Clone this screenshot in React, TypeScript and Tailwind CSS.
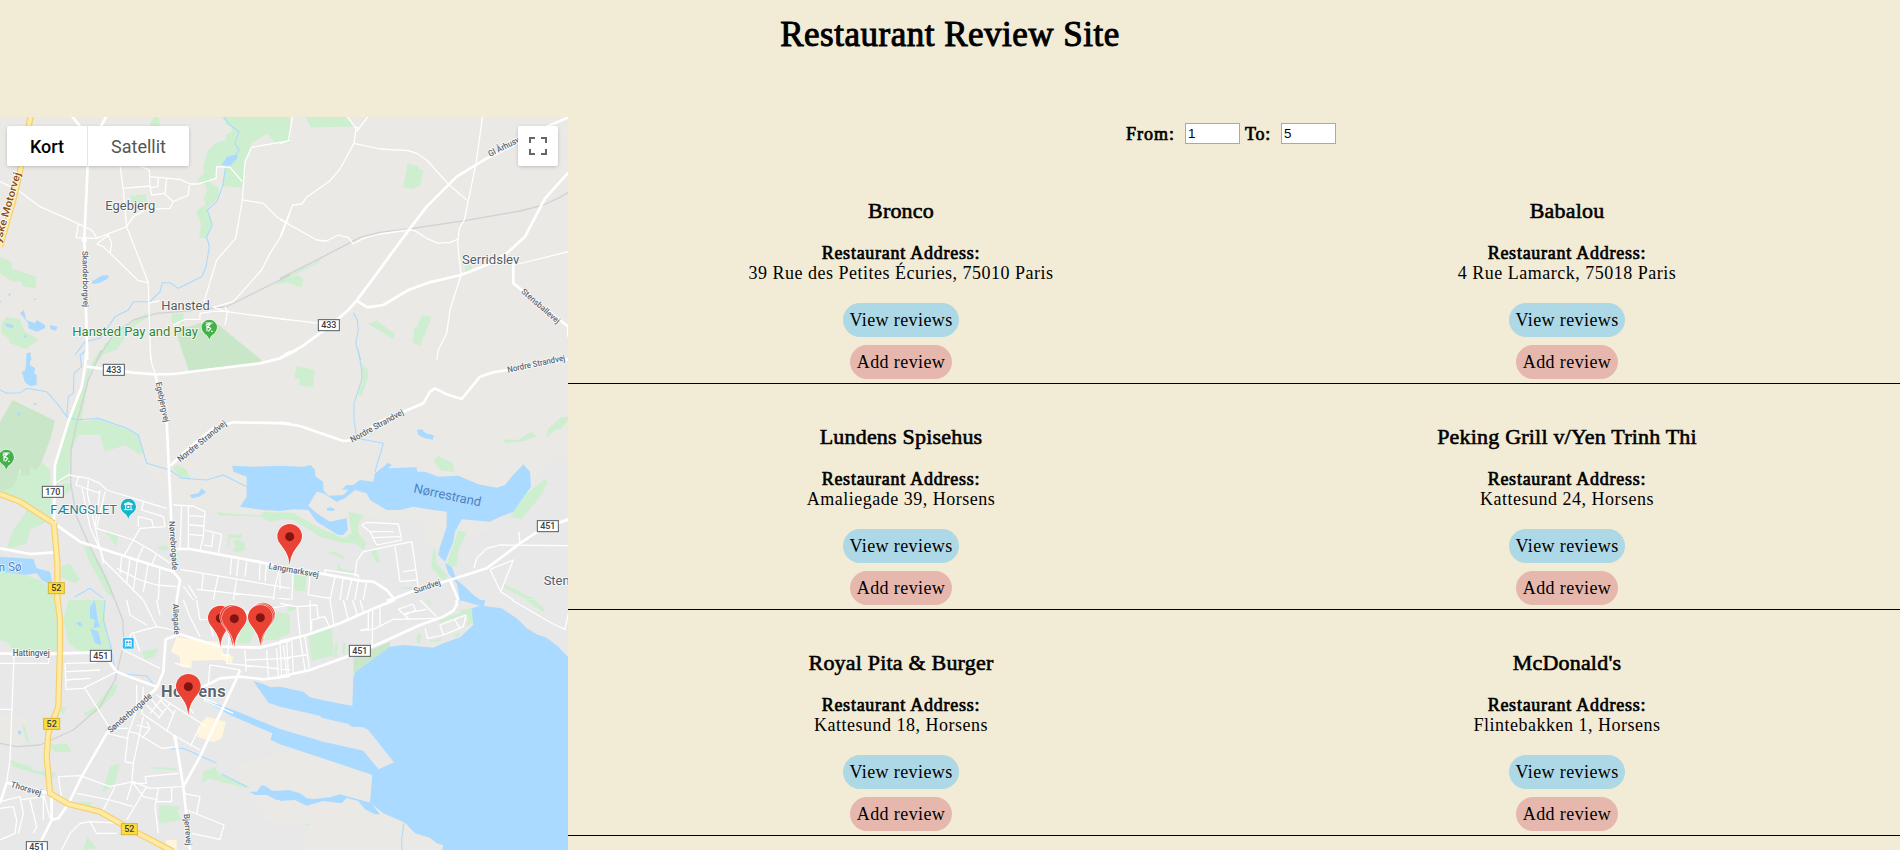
import type { ReactNode } from "react";

type Tile = "A" | "B" | "C" | "D" | "E" | "F";

/* Map sections, each drawn at three units to the pixel. */
const origins: Record<Tile, string> = {
  A: "translate(0 110) scale(.33333)",
  B: "translate(280 110) scale(.33333)",
  C: "translate(0 350) scale(.33333)",
  D: "translate(280 350) scale(.33333)",
  E: "translate(0 600) scale(.33333)",
  F: "translate(280 600) scale(.33333)",
};
const tiles: Tile[] = ["A", "B", "C", "D", "E", "F"];

const urban: Partial<Record<Tile, string>> = {
  C: "M212,400 L215,300 235,258 300,258 315,305 375,285 430,340 520,462 600,465 650,497 870,510 870,780 0,780 0,445 60,460 150,510 165,400z",
  D: "M0,508 L60,520 190,575 250,560 235,500 430,510 440,600 620,540 720,440 830,320 865,320 865,750 0,750z",
  E: "M0,120 L170,160 180,0 870,0 870,450 700,500 760,600 800,660 870,690 870,750 0,750 0,430 60,440 80,350 0,345z",
  F: "M0,0 L865,0 865,180 300,600 200,330 342,487 296,508 0,400z M0,675 L85,680 60,750 0,750z",
};

const parks: Record<Tile, string> = {
  A: "M665,18L870,18 870,100 825,98 802,72 755,98 735,155 727,233 665,228 677,165 650,170 648,205 625,215 637,222 657,235 655,262 620,295 637,340 620,387 598,383 603,340 588,310 594,298 616,285 612,262 622,240 610,215 590,215 600,200 612,190 610,165 625,120 645,100 680,90 675,75 695,65 697,52 680,45z M455,30L468,18 477,25 480,48 448,48z M392,258L438,253 440,275 395,280z M0,440L35,455 35,475 108,500 107,535 70,530 60,512 40,515 0,490z M5,640L20,620 60,628 65,645 75,665 115,688 80,717 30,700 25,685 5,670z M515,612L550,610 552,640 515,640z M300,735L315,700 350,675 375,650 440,610 445,622 390,655 350,720z M820,525L870,495 870,515z",
  B: "M0,45L10,45 10,95 0,95z M75,18L198,18 222,50 93,52z M383,160L415,170 417,178 430,182 420,228 397,237 370,232z M555,467L575,467 575,483 555,485z M15,512L50,495 72,508 62,533z M0,507L120,450 120,455 0,517z M258,638L275,640 290,632 345,672 340,687z M425,617L455,620 420,708 397,697 403,655 410,650z",
  C: "M125,335L150,360 155,500 120,490 60,450 0,425 0,400z M262,60L300,0 335,0 310,15 270,65 245,200 250,215 295,205 370,235 415,255 432,305 420,315 375,285 315,305 300,255 235,255 215,300 205,390 165,400 165,350 205,215 250,110z M515,350L535,345 560,360 570,390 540,380z M650,487L780,497 790,485 870,490 870,505 810,515 780,500 655,497z M20,595L40,540 75,490 80,470 125,490 150,510 90,540 80,580 45,590z M0,660L60,670 120,690 160,720 165,752 0,752z M683,555L725,552 725,565 690,565 688,590 683,590z M700,575L712,568 735,580 735,600 710,608 698,600 708,590z M250,588L265,590 300,640 330,700 345,745 320,730 270,640z M315,545L355,555 350,590 335,570z M470,590L500,585 505,600 480,600z M185,650L210,640 240,690 225,700 180,680z M190,400L215,400 212,420 190,440z",
  D: "M50,47L105,60 98,112 57,105 60,88 43,85z M243,40L265,60 262,90 245,137 232,135 248,95z M667,268L715,270 750,247 772,257 735,273 680,280z M798,265L805,235 845,200 865,200 865,210 845,235 825,240z M460,330L475,318 520,340 522,367 480,360z M690,500L735,435 795,388 803,397 780,440 725,507z M0,487L40,488 110,530 190,565 215,550 205,485 250,495 235,520 235,550 260,580 250,600 225,580 190,580 120,560 40,510 0,508z M140,608L165,605 195,622 195,628z M172,660L175,637 182,655 215,665 222,655 220,672z M535,540L560,548 535,600 530,650 497,645 515,600z M455,620L465,590 470,640 505,680 490,690 455,655z M40,675L80,675 75,725 43,720z M270,600L290,600 300,635 290,640z M355,710L395,712 395,720z M675,703L765,748 740,748 670,712z",
  E: "M0,0L170,0 175,100 170,155 40,150 25,130 0,120z M205,0L310,0 320,100 340,150 240,155 205,130 190,60z M425,155L475,145 465,170 435,178z M250,340L280,325 330,260 355,250 345,280 290,335 260,350z M145,435L200,430 215,455 165,455z M30,480L60,490 90,500 75,480 100,510 170,520 160,535 40,500z M305,580L330,500 360,490 345,550z M605,550L610,515 645,500 655,520 700,540 750,560 745,565 660,545 630,535z M250,750L262,710 290,745z M720,100L750,50 780,50 750,130 710,130z M790,70L835,35 870,45 870,100 830,120 790,120z M175,325L200,320 190,345z M65,375L75,378 88,430 80,425z M478,615L540,620 530,635 545,660 480,670 475,650z M450,500L530,505 530,512 450,505z M230,605L275,607 270,622z",
  F: "M85,108L155,85 162,165 95,183z M0,40L22,38 22,105 0,108z M165,130L173,130 170,175 162,170z M188,128L197,128 195,165 187,160z M220,215L220,173 330,125 330,140 225,217 220,240z M535,30L575,25 583,65 560,80 565,55z M735,0L765,0 797,30 790,35z M22,22L50,15 48,30 22,35z M410,105L425,100 420,130 410,130z M450,120L485,115 480,124 450,125z M520,105L540,97 535,112z M475,60L550,35 545,45 480,68z M435,0L445,0 462,20z M560,718L565,720 558,750 552,748z M60,675L90,672 88,677z",
};

const dark: Partial<Record<Tile, string>> = {
  A: "M528,662L600,640 652,642 782,748 787,758 567,782 545,720z",
  C: "M0,215L38,150 165,212 150,270 125,335 110,360 90,350 90,375 65,378 62,355 40,410 0,425z",
  F: "M221,215L221,173 330,125 330,140 225,217z",
};

const water: Record<Tile, string> = {
  A: "M665,165L680,140 712,133 712,145 690,168z M275,515L305,497 325,495 325,505 300,518 278,522z M60,610L72,600 78,630 105,640 110,630 135,645 135,655 110,665 85,655 85,640z M150,645L172,650 168,662 152,658z M22,555L33,549 30,557z M0,570L6,580 0,575z M15,640L40,645 38,655 20,650z M80,735L88,725 95,750 82,750z M70,678L80,675 78,685z M100,568L108,565 108,570z",
  B: "",
  C: "M65,65L75,62 78,45 80,10 92,8 90,45 105,55 103,72 110,75 110,105 90,108 75,97z M48,185L63,190 58,200z M98,162L110,158 108,166z M570,435L595,430 605,415 618,427 597,440 575,445z M0,620L100,627 110,655 150,665 160,710 125,690 110,670 80,675 0,665z",
  D: "M-143,347L-80,350 0,347 70,350 92,345 105,360 107,380 130,395 130,420 145,437 190,435 205,420 185,418 200,405 220,405 240,390 280,395 285,370 325,338 335,345 325,355 410,352 412,365 435,365 475,380 535,377 595,403 650,413 675,405 695,380 730,343 750,365 753,410 735,435 700,485 660,500 630,515 545,508 525,545 520,575 495,635 475,615 480,590 500,530 500,485 460,480 400,470 360,480 320,480 270,450 260,430 225,420 195,445 170,455 130,430 110,425 95,450 85,467 110,490 150,515 200,505 203,540 190,555 175,555 110,515 85,480 40,478 0,483 -50,480 -120,470 -100,440 -100,410 -100,380 -140,365z M495,640L515,650 530,690 560,715 580,735 605,752 540,752 530,700 505,670z M140,475L150,472 165,477 160,483 142,482z M411,240L425,238 437,250 462,256 458,269 435,265 415,255z",
  E: "M270,20L285,0 293,60 300,80 280,85 285,60 270,55z M270,85L295,95 305,135 285,130z M228,68L240,65 248,75 240,80z M52,395L60,390 65,400 58,405z M748,575L770,575 785,555 800,560 815,572 870,572 870,600 830,600 800,585 765,585z",
  F: "M540,0L615,0 612,18 665,25 710,55 740,85 770,103 800,113 835,140 865,172 865,750 487,750 490,735 470,730 450,713 405,700 375,668 310,640 270,608 277,525 150,482 0,433 -28,420 -23,400 -150,345 -240,295 -140,330 0,387 130,425 250,452 296,508 342,487 265,390 250,382 215,380 205,372 125,353 120,347 0,320 -35,308 -80,243 -50,252 -28,262 0,260 70,275 90,292 140,303 217,318 220,235 225,217 330,140 370,135 460,143 490,130 540,112 580,75 575,25 600,18z M0,573L25,570 60,580 80,595 100,597 150,592 180,583 230,597 272,608 300,643 285,643 255,628 235,603 200,594 185,610 130,603 80,617 45,600 0,603z",
};

const streams: Record<Tile, string> = {
  A: "M670,18L690,45 717,65 705,100 717,120 705,140 M677,170L668,230 650,275 622,300 637,345 620,380 628,410 618,470 605,500 535,535 510,518 487,518 480,545 450,575 400,575 385,600 345,620 325,650 300,685 255,695 225,735",
  B: "M220,608L232,630 235,660 227,700 242,750",
  C: "M0,120L20,130 60,128 80,115 140,125 175,165 200,200 205,140 220,130 222,70 245,50 240,15 260,0 M200,200L230,210 295,205 380,235 415,255 440,340 510,360 545,385 620,390 670,375 740,410 M225,740L270,715 310,745",
  D: "M235,0L245,60 245,90 222,160 222,210 230,265 310,280 285,365",
  E: "M315,0L310,60 330,130 345,210 370,222 440,228 465,258 M515,447L550,445 650,490 M665,522L740,560",
  F: "M372,668L365,720 366,750",
};

const thin: Record<Tile, string> = {
  A: "M0,215L60,245 120,290 200,325 275,360 290,383 M235,343L228,383 290,385 380,350 M290,402L325,375 335,400 330,430 M290,402L310,410 415,512 445,518 M360,165L370,240 380,350 445,518 447,600 452,750 M370,235L450,228 M420,168L448,180 450,228 455,255 492,250 520,275 565,255 568,225 M450,200L540,208 570,222 595,222 648,205 650,170 690,172 727,215 M475,203L473,230 450,233 M500,205L495,250 M520,275L510,295 440,298 400,320 380,350 M870,92L755,112 735,155 727,270 707,385 650,450 612,575 M727,270L790,280 830,320 870,345 M870,310L845,375 810,430 785,480 700,575 640,592 680,605 870,630 M445,580L480,572 M520,645L555,628 600,628 600,610 640,604 690,604 M675,590L682,605 675,645",
  B: "M38,18L25,93 0,100 M200,18L228,55 222,100 M265,18L230,65 M222,50L240,55 M222,100L300,117 385,122 410,130 440,150 508,225 560,270 M222,100L178,180 150,212 80,262 65,282 38,285 0,380 M608,18L588,160 553,330 538,355 533,400 543,495 510,600 500,670 475,720 470,750 M0,328L110,390 140,393 175,375 205,383 220,402 250,385 300,372 385,360 405,362 440,385 475,400 510,397 533,388 M715,462L865,425 M0,626L120,640",
  C: "M450,0L455,40 465,70 M165,400L205,375 265,385 300,400 320,420 450,460 500,475 M235,380L228,405 300,430 M265,390L262,430 285,530 310,640 M245,410L270,530 300,600 M315,425L290,535 400,570 460,605 510,640 M300,420L285,530 M520,465L580,468 615,485 610,560 600,600 M565,470L565,600 M545,465L540,595 M565,497L615,500 M565,525L613,528 M565,553L612,557 M615,540L665,553 655,610 M640,550L635,590 612,585 M300,590L310,630 370,690 430,750 M365,620L360,670 M390,625L380,700 M412,632L400,720 M445,640L430,725 M480,650L475,750 M400,570L370,620 M430,590L410,632 M470,610L455,645 M695,625L690,675 M715,628L710,678 M740,635L735,680 M780,640L778,690 M800,640L795,695 M840,650L825,710 820,750 M540,658L870,715 M610,668L605,720 M350,655L420,690 470,705 530,710 M430,455L425,480 490,500 495,530 420,535 400,570 M415,530L415,500 455,510 460,530 M550,708L580,750 M565,705L590,745 M655,675L640,750 M710,690L700,750 M590,718L870,748",
  D: "M245,525L260,517 355,522 365,570 290,585 270,545 340,545 M245,525L270,545 M280,563L360,560 M225,680L230,635 250,605 395,575 405,640 415,715 M345,590L360,695 410,690 M370,665L405,660 M582,655L590,625 620,595 660,585 865,587 M720,580L717,545 M630,658L662,725 700,630 630,658 M662,725L700,750 M135,675L135,660 235,675 235,685 M90,670L85,735 150,745 M165,680L150,750 M190,682L180,750 M215,690L200,750 M235,690L225,750 M260,695L250,750 M40,660L35,750 M0,670L0,720",
  E: "M0,190L145,190 150,160 M42,165L30,480 20,545 M0,328L35,328 M195,190L198,268 250,265 350,215 M198,215L300,210 M198,240L270,235 M195,190L290,188 M255,265L330,385 385,385 M320,400L385,415 M410,255L410,330 385,400 375,485 M430,350L400,490 375,485 M400,490L395,555 380,600 M430,260L425,340 M425,340L520,405 600,450 M385,395L410,400 485,445 530,440 M440,365L450,385 M410,375L450,385 430,410 M470,285L620,380 M455,300L490,340 M440,315L480,355 M490,290L450,340 M510,310L475,355 M480,300L520,340 M525,330L500,395 M610,300L700,340 M580,340L560,310 M600,290L650,310 M600,380L570,440 M435,530L535,520 M435,530L440,550 395,550 M175,530L185,595 210,605 M175,530L240,527 330,560 400,545 450,565 545,560 M230,580L330,600 400,620 M345,560L310,630 M440,560L380,660 M400,550L430,590 475,600 M475,565L465,620 475,700 M515,560L515,605 470,605 M550,580L600,590 590,640 M560,630L672,675 660,718 575,700 M0,605L60,590 70,640 55,700 M0,625L40,620 50,660 45,700 0,720 M60,600L130,590 130,660 M90,600L110,680 100,700 M130,580L150,655 M185,750L210,700 240,670 270,665 370,670 M270,665L290,700 350,700 M380,0L390,45 440,75 M430,0L470,80 520,90 M470,0L480,45 M365,150L395,100 470,80 M370,150L430,180 480,205 M400,100L420,155 M550,0L570,50 600,110 M590,0L600,60 M600,60L870,15 M625,50L640,110 M690,90L680,190 870,210 M665,165L690,165 M735,150L738,215 M800,150L805,230 M830,145L835,230 M850,135L860,225 M735,180L870,175 M630,195L625,250 M630,195L720,210 M525,190L570,200 M520,405L530,450",
  F: "M0,10L50,20 110,15 115,55 95,60 95,90 M52,20L60,105 M90,0L92,100 M110,55L135,50 150,85 M150,0L162,75 M190,0L205,60 M218,0L232,45 M240,0L250,35 M265,35L265,85 240,92 M278,30L277,140 M300,22L300,75 M240,92L280,88 340,58 470,55 M355,28L398,12 407,30 375,45 385,60 M355,28L385,55 M375,40L440,28 M420,0L470,50 M435,85L443,115 490,105 550,80 558,45 480,75 490,105 M525,60L540,85 M695,0L820,72 855,88 865,40 M0,175L80,165 M0,130L5,225 M20,125L25,220 M35,120L40,220 M60,110L75,210 M75,110L88,205",
};

const major: Record<Tile, string> = {
  A: "M267,60L263,170 253,388 257,560 262,750 M215,18L240,48 M320,18L303,48",
  B: "M865,22L800,50 700,105 620,145 530,200 440,290 385,362 230,572 205,600 140,655 65,710 0,745 M230,572L262,592 310,585 385,540 445,518 543,495 620,465 680,430 735,380 795,265 865,188 M700,460L700,520 865,650 865,680",
  C: "M260,0L255,50 245,110 205,215 165,345 162,520 M870,5L840,25 780,40 640,57 520,72 465,73 400,68 260,50 M162,520L240,575 410,630 520,665 540,690 530,750 M0,595L90,612 165,607 M465,70L500,215 512,470 520,665 M512,347L560,300 640,235 700,217 870,220 M530,597L570,597 800,640 870,660",
  D: "M0,25L50,0 M0,218L60,228 190,273 215,270 300,215 370,185 430,160 450,125 465,115 500,133 545,147 600,80 640,67 740,50 865,28 M0,650L120,670 240,692 280,695 320,720 345,750 M320,752L345,745 400,722 510,690 620,655 720,580 780,540 865,508 M510,690L535,750",
  E: "M0,160L90,163 270,158 M320,175L350,215 400,235 470,260 M470,265L490,215 497,118 540,103 660,140 780,143 870,120 M470,265L320,400 245,530 205,612 175,655 155,660 M155,580L155,660 130,710 110,750 M550,560L600,470 710,235 720,210 M600,265L660,235 720,230 790,238 870,228 M525,405L550,560 570,750 M530,0L528,100 M20,548L150,580 M20,548L0,610",
  F: "M0,125L80,105 180,70 290,22 345,0 M0,230L90,210 200,170 300,130 420,75 490,50 520,32 530,15 530,0",
};

const rails: Record<Tile, string> = {
  A: "M870,495L740,560 680,590 560,603 470,610 400,630 340,675 290,750",
  B: "M0,505L120,445 240,382 300,367 385,357 555,332 720,303 790,285 840,262 865,247",
  C: "M305,0L265,90 230,220 213,300 212,400 230,500 270,590 310,670 345,750",
  D: "",
  E: "M345,0L368,60 372,130 345,240 300,320 220,390 120,435 50,440 0,430",
  F: "",
};

const highways: Partial<Record<Tile, string>> = {
  A: "M92,18L80,80 60,185 40,270 0,410",
  C: "M0,432L60,455 162,520 M162,520L172,640 172,760",
  E: "M172,-10L180,60 180,150 175,320 145,400 140,470 150,580 205,612 300,635 390,687 520,755",
};

const shops = "M530,110L600,122 665,125 670,160 700,170 695,190 665,180 575,182 575,205 540,200 540,170 512,155z M600,372L620,350 678,365 665,415 640,427 592,410z M500,720L530,720 530,750 495,740z";

function Layer({ data, ...rest }: { data: Partial<Record<Tile, string>>; fill?: string; stroke?: string; strokeWidth?: number }) {
  return (
    <g fill="none" strokeLinejoin="round" {...rest}>
      {tiles.map((t) => (data[t] ? <path key={t} transform={origins[t]} d={data[t]} /> : null))}
    </g>
  );
}

function Label({ x, y, w, size = 26, rotate = 0, color = "#5c6670", children }: {
  x: number; y: number; w?: number; size?: number; rotate?: number; color?: string; children: ReactNode;
}) {
  return (
    <text
      transform={`translate(${x} ${y}) rotate(${rotate})`}
      fontSize={size}
      fontWeight={size < 35 ? 500 : 400}
      fill={color}
      stroke="#fff"
      strokeOpacity={0.8}
      strokeWidth={5}
      paintOrder="stroke"
      textLength={w}
      lengthAdjust="spacingAndGlyphs"
    >
      {children}
    </text>
  );
}

function Shield({ x, y, n, yellow = false }: { x: number; y: number; n: string; yellow?: boolean }) {
  const w = yellow ? 48 : 63;
  return (
    <g transform={`translate(${x} ${y})`}>
      <rect width={w} height={33} fill={yellow ? "#fbdd3e" : "#fff"} stroke={yellow ? "#d8b52f" : "#555b61"} strokeWidth={3} />
      <text x={w / 2} y={26} fontSize={27} fontWeight={500} textAnchor="middle" fill="#3c4043">{n}</text>
    </g>
  );
}

function Pin({ x, y }: { x: number; y: number }) {
  return (
    <g transform={`translate(${x} ${y})`}>
      <path d="M0,0C-3,-30 -11,-40 -23,-57C-31,-68 -37,-75 -37,-87A37,37 0 0 1 37,-87C37,-75 31,-68 23,-57C11,-40 3,-30 0,0z" fill="#ea4335" stroke="#fff" strokeOpacity={0.7} strokeWidth={4} paintOrder="stroke" />
      <circle cy={-86} r={13.5} fill="#7f1410" />
    </g>
  );
}

function Poi({ x, y, color, children }: { x: number; y: number; color: string; children: ReactNode }) {
  return (
    <g transform={`translate(${x} ${y})`}>
      <path d="M0,37C-3,25 -9,22 -16,16A23,23 0 1 1 16,16C9,22 3,25 0,37z" fill={color} stroke="#fff" strokeWidth={3} paintOrder="stroke" />
      {children}
    </g>
  );
}

const golfer = (
  <path d="M-11,-14L10,-14 M-9,-10L-9,-8L0,-12 M4,-12L-4,-3L4,2L-3,11 M-7,-6L-7,11 M5,11L10,11" fill="none" stroke="#fff" strokeWidth={3.5} />
);

function CityMap() {
  return (
    <svg className="block h-[733px] w-[568px]" viewBox="0 117 568 733" fontFamily="Roboto, sans-serif">
      <rect y={117} width={568} height={733} fill="#eae9e5" />
      <Layer data={urban} fill="#e8e8e8" />
      <Layer data={parks} fill="#ceeed0" />
      <Layer data={dark} fill="#c9e7c8" />
      <path transform={origins.E} d={shops} fill="#fff6dd" />
      <Layer data={water} fill="#aadaff" />
      <Layer data={streams} stroke="#aadaff" strokeWidth={3.2} />
      <Layer data={rails} stroke="#d0d2d5" strokeWidth={4} />
      <Layer data={thin} stroke="#fff" strokeWidth={3.8} />
      <Layer data={major} stroke="#fff" strokeWidth={8} />
      <Layer data={highways} stroke="#f6cf6d" strokeWidth={19} />
      <Layer data={highways} stroke="#ffeba3" strokeWidth={12} />

      <g transform={origins.A}>
        <circle cx={253} cy={389} r={8} fill="#fff" />
        <Label x={316} y={299} w={150} size={39} color="#545c66">Egebjerg</Label>
        <Label x={484} y={599} w={145} size={39} color="#545c66">Hansted</Label>
        <Label x={217} y={677} w={377} size={38} color="#2d8639">Hansted Pay and Play</Label>
        <Label x={247} y={423} w={168} size={24} rotate={89}>Skanderborgvej</Label>
        <Label x={2} y={400} w={218} size={31} rotate={-74} color="#8a4b16">yske Motorvej</Label>
        <Poi x={628} y={653} color="#43b049">{golfer}</Poi>
      </g>
      <g transform={origins.B}>
        <Label x={546} y={461} w={172} size={39} color="#545c66">Serridslev</Label>
        <Label x={630} y={141} w={120} size={26} rotate={-27}>Gl Århusvej</Label>
        <Label x={722} y={547} w={145} size={25} rotate={41}>Stensballevej</Label>
        <Shield x={115} y={629} n="433" />
      </g>
      <g transform={origins.C}>
        <Shield x={310} y={43} n="433" />
        <Shield x={127} y={409} n="170" />
        <Shield x={145} y={698} n="52" yellow />
        <Label x={467} y={98} w={122} size={25} rotate={78}>Egebjergvej</Label>
        <Label x={507} y={514} w={147} size={25} rotate={86}>Nørrebrogade</Label>
        <Label x={541} y={337} w={180} size={26} rotate={-39}>Nordre Strandvej</Label>
        <Label x={151} y={493} w={200} size={38} color="#1d8794">FÆNGSLET</Label>
        <Label x={-22} y={665} w={87} size={37} rotate={-2} color="#4f7fc0">en Sø</Label>
        <Poi x={19} y={323} color="#43b049">{golfer}</Poi>
        <Poi x={385} y={470} color="#12b5c9">
          <path d="M-13,-7L0,-13L13,-7z M-13,9H13 M-8,-6V8 M8,-6V8" fill="#fff" stroke="#fff" strokeWidth={3} />
          <rect x={-3} y={-2} width={6} height={6} fill="#fff" />
        </Poi>
      </g>
      <g transform={origins.D}>
        <Label x={217} y={278} w={178} size={26} rotate={-29}>Nordre Strandvej</Label>
        <Label x={684} y={68} w={176} size={26} rotate={-12}>Nordre Strandvej</Label>
        <text transform="translate(399 427) rotate(12)" fontSize={39} fill="#4f82c4" textLength={206}>Nørrestrand</text>
        <Label x={-35} y={656} w={152} size={26} rotate={10}>Langmarksvej</Label>
        <Label x={404} y={731} w={84} size={25} rotate={-19}>Sundvej</Label>
        <Label x={791} y={706} size={39} color="#545c66">Stensballe</Label>
        <Shield x={772} y={512} n="451" />
      </g>
      <g transform={origins.E}>
        <Label x={38} y={167} w={111} size={25}>Hattingvej</Label>
        <Label x={518} y={12} w={92} size={25} rotate={87}>Allegade</Label>
        <Label x={332} y={400} w={166} size={26} rotate={-41}>Sønderbrogade</Label>
        <Label x={31} y={561} w={94} size={26} rotate={16}>Thorsvej</Label>
        <Label x={551} y={643} w={94} size={25} rotate={85}>Bjerrevej</Label>
        <text x={483} y={290} fontSize={49} fontWeight={700} fill="#5c6670" stroke="#fff" strokeWidth={5} paintOrder="stroke" textLength={194}>Horsens</text>
        <Shield x={271} y={151} n="451" />
        <Shield x={79} y={725} n="451" />
        <Shield x={131} y={355} n="52" yellow />
        <Shield x={364} y={671} n="52" yellow />
        <g transform="translate(368 113)">
          <rect width={34} height={34} rx={4} fill="#20b4f2" stroke="#fff" strokeWidth={2} />
          <path d="M8,7H26V25H8z M10,25L6,30 M24,25L28,30" fill="#fff" stroke="#fff" strokeWidth={2} />
          <path d="M10,11H16V17H10z M18,11H24V17H18z M10,20H14V23H10z M20,20H24V23H20z" fill="#20b4f2" />
        </g>
        <Pin x={661} y={141} />
        <Pin x={697} y={139} />
        <Pin x={703} y={142} />
        <Pin x={788} y={132} />
        <Pin x={785} y={136} />
        <Pin x={781} y={139} />
        <Pin x={565} y={346} />
      </g>
      <g transform={origins.F}>
        <Shield x={208} y={136} n="451" />
      </g>
      <g transform={origins.D}>
        <Pin x={29} y={646} />
      </g>
    </svg>
  );
}

const restaurants = [
  { name: "Bronco", address: "39 Rue des Petites Écuries, 75010 Paris" },
  { name: "Babalou", address: "4 Rue Lamarck, 75018 Paris" },
  { name: "Lundens Spisehus", address: "Amaliegade 39, Horsens" },
  { name: "Peking Grill v/Yen Trinh Thi", address: "Kattesund 24, Horsens" },
  { name: "Royal Pita & Burger", address: "Kattesund 18, Horsens" },
  { name: "McDonald's", address: "Flintebakken 1, Horsens" },
];

function RestaurantCard({ name, address }: { name: string; address: string }) {
  return (
    <article className="flex h-[226px] flex-col items-center border-b border-black pt-10">
      <h3 className="text-[22px] leading-[26px] tracking-[0.2px] [-webkit-text-stroke:0.6px_black]">{name}</h3>
      <p className="mt-[19px] text-center text-[18px] leading-5 tracking-[0.5px]">
        <span className="block tracking-[0.75px] [-webkit-text-stroke:0.7px_black]">Restaurant Address:</span>
        {address}
      </p>
      <button className="mt-5 h-[34px] w-[116px] rounded-full bg-[#add8e6] text-[18px] tracking-[0.4px]">View reviews</button>
      <button className="mt-2 h-[34px] w-[102px] rounded-full bg-[#e6b8ad] text-[18px] tracking-[0.4px]">Add review</button>
    </article>
  );
}

const field = "h-[21px] w-[55px] border border-[#a9a9a9] bg-white px-[2px] font-['Liberation_Sans',sans-serif] text-[13.33px] leading-4";

export default function App() {
  return (
    <div className="flex h-[850px] flex-col overflow-hidden bg-[#f2ebd6] font-['Liberation_Serif',serif] text-black">
      <header className="flex h-[117px] shrink-0 justify-center pt-[13px]">
        <h1 className="text-[35px] leading-[44px] tracking-[0.5px] [-webkit-text-stroke:1px_black]">Restaurant Review Site</h1>
      </header>
      <main className="flex min-h-0 flex-1">
        <section className="relative w-[568px] shrink-0 overflow-hidden">
          <CityMap />
          <div className="absolute top-[9px] left-[7px] flex h-10 rounded-[2px] bg-white font-[Roboto,sans-serif] text-[18px] shadow-[0_1px_4px_-1px_rgba(0,0,0,0.3)]">
            <button className="w-[81px] border-r border-[#e6e6e6] font-medium">Kort</button>
            <button className="w-[101px] text-[#565656]">Satellit</button>
          </div>
          <button aria-label="Fullscreen" className="absolute top-[9px] left-[518px] flex h-10 w-10 items-center justify-center rounded-[2px] bg-white shadow-[0_1px_4px_-1px_rgba(0,0,0,0.3)]">
            <svg width="18" height="18" viewBox="0 0 18 18" fill="none" stroke="#666" strokeWidth="2">
              <path d="M1 6V1H6 M12 1H17V6 M17 12V17H12 M6 17H1V12" />
            </svg>
          </button>
        </section>
        <section className="min-w-0 flex-1">
          <form className="flex h-[41px] items-start pt-[6px] pl-[558px]">
            <label className="flex items-center">
              <span className="w-[59px] text-[18px] leading-5 tracking-[1px] [-webkit-text-stroke:0.7px_black]">From:</span>
              <input className={field} defaultValue="1" />
            </label>
            <label className="ml-[5px] flex items-center">
              <span className="w-9 text-[18px] leading-5 tracking-[0.8px] [-webkit-text-stroke:0.7px_black]">To:</span>
              <input className={field} defaultValue="5" />
            </label>
          </form>
          <div className="grid grid-cols-2">
            {restaurants.map((r) => (
              <RestaurantCard key={r.name} {...r} />
            ))}
          </div>
        </section>
      </main>
    </div>
  );
}
